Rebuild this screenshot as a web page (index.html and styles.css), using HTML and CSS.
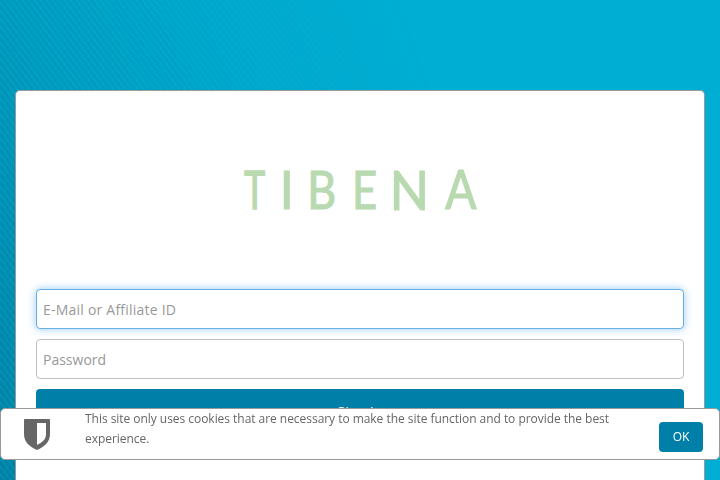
FILE: index.html
```
<!DOCTYPE html>
<html lang="en">
<head>
<meta charset="utf-8">
<title>Sign In</title>
<link rel="stylesheet" href="styles.css">
</head>
<body>
<main class="panel">
  <svg class="logo" viewBox="0 0 260 60" role="img" aria-label="TIBENA">
    <g text-anchor="middle">
      <text class="narrow" transform="translate(24.7 53.6) scale(.67 .98)">T</text>
      <text transform="translate(56.7 53.6) scale(.96 .98)">I</text>
      <text transform="translate(91.7 53.6) scale(.85 .98)">B</text>
      <text transform="translate(134.5 53.6) scale(.83 .98)">E</text>
      <text transform="translate(179.5 54.5) scale(.98 1.02)">N</text>
      <text transform="translate(231 53.6) scale(.88 1.04)">A</text>
    </g>
  </svg>
  <form class="form">
    <input class="field field-active" type="text" placeholder="E-Mail or Affiliate ID">
    <input class="field" type="password" placeholder="Password">
    <button class="submit" type="button">Sign In</button>
  </form>
</main>
<aside class="cookies">
  <svg class="shield" viewBox="0 0 26 31">
    <path fill="#666" fill-rule="evenodd" d="M1 0H25Q26 0 26 1V15C26 22 22 27 13 31C4 27 0 22 0 15V1Q0 0 1 0ZM13 4V26C19 23 22 20 22 15V4Z"/>
  </svg>
  <p class="message">This site only uses cookies that are necessary to make the site function and to provide the best experience.</p>
  <button class="ok" type="button">OK</button>
</aside>
</body>
</html>
```
FILE: styles.css
```
* { box-sizing: border-box; }
html { height: 100%; overflow: hidden; }
body {
  margin: 0;
  height: 100%;
  padding: 90px 15px 0;
  overflow: hidden;
  font-family: "Open Sans", sans-serif;
  background: linear-gradient(64deg, #0087ab 0%, #009fc3 24%, #00abd0 46%, #00aed3 65%);
}
body::before {
  content: "";
  position: fixed;
  inset: 0;
  background: linear-gradient(to top right, rgba(0, 80, 110, .14) 0 25%, rgba(0, 180, 210, .1) 25% 50%, rgba(0, 80, 110, .14) 50% 75%, rgba(0, 180, 210, .1) 75%) 0 0 / 6px 8px;
  -webkit-mask-image: linear-gradient(70deg, #000 0%, rgba(0, 0, 0, .6) 28%, transparent 65%);
  mask-image: linear-gradient(70deg, #000 0%, rgba(0, 0, 0, .6) 28%, transparent 65%);
}
.panel {
  position: relative;
  height: 390px;
  padding: 64px 20px 0;
  background: #fff;
  border: 1px solid #999;
  border-bottom: 0;
  border-radius: 5px 5px 0 0;
}
.logo { display: block; width: 260px; height: 60px; margin: 0 auto 74px; overflow: visible; }
.logo text {
  font-family: Lato, sans-serif;
  font-size: 52.5px;
  fill: #b9d9b0;
  stroke: #b9d9b0;
  stroke-width: 1.2px;
  stroke-linejoin: miter;
}
.logo .narrow { stroke-width: 1.7px; }
.form { display: flex; flex-direction: column; gap: 10px; }
.field {
  height: 40px;
  padding: 0 6px;
  border: 1px solid #bfbfbf;
  border-radius: 4px;
  background: #fff;
  font: 14px "Open Sans", sans-serif;
  outline: none;
}
.field::placeholder { color: #999; opacity: 1; }
.field-active { border-color: #66afe9; box-shadow: 0 0 8px rgba(82, 168, 236, .6); letter-spacing: .22px; }
.submit, .ok { border: 0; border-radius: 4px; background: #0080a8; color: #fff; font-family: inherit; }
.submit { height: 44px; padding: 0; font-size: 14px; letter-spacing: .3px; }
.cookies {
  position: fixed;
  left: 0;
  right: 0;
  bottom: 20px;
  height: 52px;
  display: flex;
  align-items: flex-start;
  padding: 0 16px 0 23px;
  background: #fff;
  border: 1px solid #999;
  border-radius: 5px;
}
.shield { flex: none; width: 26px; height: 31px; margin: 10px 35px 0 0; }
.message { flex: 1; margin: 0; padding-right: 20px; color: #666; font-size: 12px; line-height: 20px; letter-spacing: -.04px; }
.ok { flex: none; width: 44px; height: 30px; margin-top: 13px; padding: 0 0 2px; font-size: 12px; }
```
